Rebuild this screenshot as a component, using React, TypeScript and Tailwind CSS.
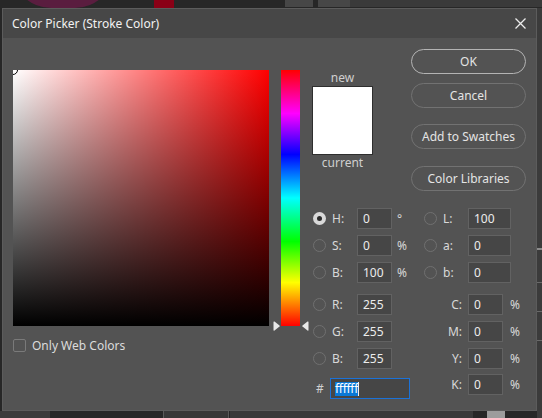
import React from 'react';

const FONT = "font-['Noto_Sans','Liberation_Sans',sans-serif]";

// Radio used by the HSB / RGB / Lab rows
function Radio({ checked = false }: { checked?: boolean }) {
  if (checked) {
    return (
      <div className="w-[13px] h-[13px] shrink-0 rounded-full bg-[#d9d9d9] flex items-center justify-center">
        <div className="w-[5px] h-[5px] rounded-full bg-[#2b2b2b]" />
      </div>
    );
  }
  return <div className="w-[13px] h-[13px] shrink-0 rounded-full border border-[#707070]" />;
}

function Field({ value, width = 'w-[35px]' }: { value: string; width?: string }) {
  return (
    <div
      className={`${width} h-[21px] shrink-0 bg-[#464646] border border-[#626262] pl-[5px] flex items-center text-[12px] text-[#ececec] leading-none`}
    >
      {value}
    </div>
  );
}

function RadioRow({
  label,
  value,
  unit,
  checked,
  wide,
}: {
  label: string;
  value: string;
  unit?: string;
  checked?: boolean;
  wide?: boolean;
}) {
  return (
    <div className="flex items-center h-[21px]">
      <Radio checked={checked} />
      <div className="w-[31px] pl-[6px] text-[12px] text-[#d8d8d8]">{label}</div>
      <Field value={value} width={wide ? 'w-[43px]' : 'w-[35px]'} />
      {unit && <div className="ml-[5px] text-[12px] text-[#d8d8d8]">{unit}</div>}
    </div>
  );
}

function CmykRow({ label, value }: { label: string; value: string }) {
  return (
    <div className="flex items-center h-[21px]">
      <div className="w-[44px] pr-[6px] text-right text-[12px] text-[#d8d8d8]">{label}</div>
      <Field value={value} />
      <div className="ml-[7px] text-[12px] text-[#d8d8d8]">%</div>
    </div>
  );
}

function DialogButton({ label, primary = false, className = '' }: { label: string; primary?: boolean; className?: string }) {
  return (
    <div
      className={`h-[25px] w-[115px] rounded-full flex items-center justify-center text-[12px] text-[#e4e4e4] ${
        primary ? 'border-[1.5px] border-[#b4b4b4]' : 'border border-[#727272]'
      } ${className}`}
    >
      {label}
    </div>
  );
}

// What is visible of the Photoshop workspace behind the dialog
function Backdrop() {
  return (
    <>
      <div className="absolute left-[12px] top-[-70px] w-[102px] h-[78px] rounded-full bg-[#5a1d3f]" />
      <div className="absolute left-[154px] top-0 w-[20px] h-[8px] bg-[#8a0016]" />
      <div className="absolute left-[285px] top-0 w-[28px] h-[7px] bg-[#474747]" />
      <div className="absolute left-[318px] top-0 w-[32px] h-[7px] bg-[#474747]" />
      <div className="absolute left-[350px] top-0 w-[192px] h-[7px] bg-[#3a3a3a]" />
      <div className="absolute left-[537px] top-[8px] w-[5px] h-[410px] bg-[#3b3b3b]" />
      <div className="absolute left-[537px] top-[248px] w-[5px] h-[2px] bg-[#8c8c8c]" />
      <div className="absolute left-[537px] top-[282px] w-[5px] h-[1px] bg-[#6a6a6a]" />
      <div className="absolute left-[537px] top-[311px] w-[5px] h-[1px] bg-[#6a6a6a]" />
      <div className="absolute left-[537px] top-[340px] w-[5px] h-[1px] bg-[#6a6a6a]" />
      <div className="absolute left-0 top-[411px] w-[50px] h-[7px] bg-[#3c3c3c]" />
      <div className="absolute left-[163px] top-[409px] w-[66px] h-[12px] border border-[#5a5a5a] bg-[#383838]" />
      <div className="absolute left-[230px] top-[411px] w-[243px] h-[7px] bg-[#3a3a3a]" />
      <div className="absolute left-[487px] top-[411px] w-[18px] h-[7px] bg-[#9c9c9c]" />
    </>
  );
}

export default function App() {
  return (
    <div className={`relative w-[542px] h-[418px] overflow-hidden bg-[#272727] pt-[8px] pl-[2px] ${FONT}`}>
      <Backdrop />

      <div className="relative w-[535px] h-[403px] flex flex-col bg-[#535353] border border-[#5c5c5c]">
        {/* Title bar */}
        <div className="h-[29px] shrink-0 bg-[#474747] flex items-center justify-between pl-[9px] pr-[9px]">
          <span className="text-[12px] text-[#f2f2f2]">Color Picker (Stroke Color)</span>
          <svg width="11" height="11" viewBox="0 0 11 11" className="mr-[1px]">
            <path d="M0.5 0.5 L10.5 10.5 M10.5 0.5 L0.5 10.5" stroke="#ececec" strokeWidth="1.3" />
          </svg>
        </div>

        {/* Body */}
        <div className="flex pl-[10px]">
          {/* Saturation / brightness field */}
          <div className="pt-[32px] flex flex-col">
            <div className="relative w-[256px] h-[256px] overflow-hidden bg-[linear-gradient(to_right,#ffffff,#ff0000)]">
              <div className="absolute inset-0 bg-[linear-gradient(to_bottom,rgba(0,0,0,0),#000000)]" />
              <div className="absolute left-[-5px] top-[-5px] w-[10px] h-[10px] rounded-full border-[1.5px] border-black" />
            </div>
            <div className="mt-[13px] flex items-center h-[13px]">
              <div className="w-[13px] h-[13px] rounded-[2px] border border-[#7a7a7a]" />
              <span className="ml-[6px] text-[12px] text-[#dcdcdc]">Only Web Colors</span>
            </div>
          </div>

          {/* Hue slider */}
          <div className="pt-[32px] ml-[12px]">
            <div className="relative w-[19px] h-[256px] bg-[linear-gradient(to_top,#ff0000,#ffff00_17%,#00ff00_33%,#00ffff_50%,#0000ff_67%,#ff00ff_83%,#ff0000)]">
              <svg width="7" height="10" viewBox="0 0 7 10" className="absolute left-[-8px] top-[251px]">
                <path d="M0.5 1 Q0.5 0 1.5 0.6 L6.5 4.4 Q7 5 6.5 5.6 L1.5 9.4 Q0.5 10 0.5 9 Z" fill="#e8e8e8" />
              </svg>
              <svg width="7" height="10" viewBox="0 0 7 10" className="absolute left-[21px] top-[251px]">
                <path d="M6.5 1 Q6.5 0 5.5 0.6 L0.5 4.4 Q0 5 0.5 5.6 L5.5 9.4 Q6.5 10 6.5 9 Z" fill="#e8e8e8" />
              </svg>
            </div>
          </div>

          {/* Right column */}
          <div className="ml-[12px] w-[214px] pt-[11px] flex flex-col">
            <div className="flex justify-between">
              <div className="pt-[21px] w-[61px] flex flex-col items-center">
                <div className="h-[16px] leading-[16px] text-[12px] text-[#cfcfcf]">new</div>
                <div className="w-[61px] h-[69px] bg-white border border-[#2e2e2e]" />
                <div className="h-[16px] leading-[16px] text-[12px] text-[#cfcfcf]">current</div>
              </div>
              <div className="flex flex-col">
                <DialogButton label="OK" primary />
                <DialogButton label="Cancel" className="mt-[9px]" />
                <DialogButton label="Add to Swatches" className="mt-[16px]" />
                <DialogButton label="Color Libraries" className="mt-[17px]" />
              </div>
            </div>

            <div className="mt-[17px] pl-[1px] flex">
              {/* HSB / RGB / hex */}
              <div className="w-[111px] flex flex-col">
                <div className="flex flex-col gap-[6px]">
                  <RadioRow label="H:" value="0" unit="°" checked />
                  <RadioRow label="S:" value="0" unit="%" />
                  <RadioRow label="B:" value="100" unit="%" />
                </div>
                <div className="mt-[11px] flex flex-col gap-[6px]">
                  <RadioRow label="R:" value="255" />
                  <RadioRow label="G:" value="255" />
                  <RadioRow label="B:" value="255" />
                </div>
                <div className="mt-[9px] flex items-center h-[21px]">
                  <div className="w-[17px] pl-[3px] text-[12px] text-[#d0d0d0]">#</div>
                  <div className="w-[80px] h-[21px] border border-[#1b72d8] bg-[#464646] pl-[4px] flex items-center">
                    <span className="bg-[#0a78d7] text-white text-[12px] leading-[14px] tracking-[-0.3px]">ffffff</span>
                    <span className="w-[1px] h-[14px] bg-[#f0f0f0]" />
                  </div>
                </div>
              </div>

              {/* Lab / CMYK */}
              <div className="flex flex-col">
                <div className="flex flex-col gap-[6px]">
                  <RadioRow label="L:" value="100" wide />
                  <RadioRow label="a:" value="0" wide />
                  <RadioRow label="b:" value="0" wide />
                </div>
                <div className="mt-[11px] flex flex-col gap-[6px]">
                  <CmykRow label="C:" value="0" />
                  <CmykRow label="M:" value="0" />
                  <CmykRow label="Y:" value="0" />
                </div>
                <div className="mt-[5px]">
                  <CmykRow label="K:" value="0" />
                </div>
              </div>
            </div>
          </div>
        </div>
      </div>
    </div>
  );
}
